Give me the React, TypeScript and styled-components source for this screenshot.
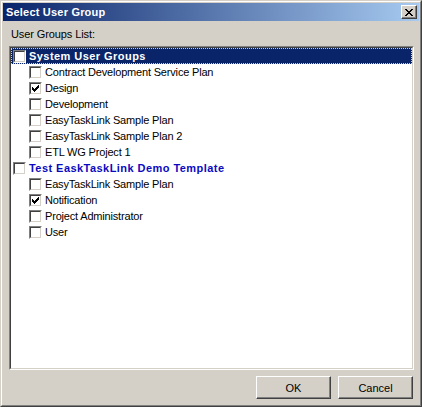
import React from "react";
import styled, { createGlobalStyle, css } from "styled-components";

const Global = createGlobalStyle`
  html, body { margin: 0; padding: 0; background: #d4d0c8; }
  * { box-sizing: border-box; }
`;

const Window = styled.div`
  width: 422px;
  height: 407px;
  background: #d4d0c8;
  border: 1px solid;
  border-color: #d4d0c8 #404040 #404040 #d4d0c8;
  font-family: "Liberation Sans", Arial, sans-serif;
  font-size: 11px;
  color: #000;
  display: flex;
`;

const Inner = styled.div`
  flex: 1;
  border: 1px solid;
  border-color: #ffffff #808080 #808080 #ffffff;
  padding: 1px;
  display: flex;
  flex-direction: column;
`;

const TitleBar = styled.div`
  height: 18px;
  background: linear-gradient(to right, #0a246a, #a6caf0);
  display: flex;
  align-items: center;
  justify-content: space-between;
  padding: 0 2px 0 3px;
`;

const TitleText = styled.span`
  color: #fff;
  font-weight: bold;
  font-size: 11px;
  letter-spacing: 0.2px;
`;

const CloseButton = styled.div`
  width: 16px;
  height: 14px;
  background: #d4d0c8;
  border: 1px solid;
  border-color: #ffffff #404040 #404040 #ffffff;
  box-shadow: inset -1px -1px 0 #808080;
  display: flex;
  align-items: center;
  justify-content: center;
`;

const Body = styled.div`
  flex: 1;
  display: flex;
  flex-direction: column;
  padding: 6px 5px 5px 6px;
`;

const Label = styled.div`
  line-height: 14px;
  height: 14px;
  margin-bottom: 5px;
  padding-left: 2px;
  letter-spacing: -0.1px;
`;

const ListBox = styled.div`
  flex: 1;
  background: #fff;
  border: 1px solid;
  border-color: #808080 #ffffff #ffffff #808080;
  display: flex;
`;

const ListInner = styled.div`
  flex: 1;
  border: 1px solid;
  border-color: #404040 #d4d0c8 #d4d0c8 #404040;
  display: flex;
  flex-direction: column;
`;

const Row = styled.div<{ $child?: boolean; $selected?: boolean }>`
  height: 16px;
  display: flex;
  align-items: center;
  gap: 3px;
  padding-left: ${(p) => (p.$child ? 18 : 2)}px;
  ${(p) =>
    p.$selected &&
    css`
      background: #0a246a;
      outline: 1px dotted #d0d0d0;
      outline-offset: -1px;
    `}
`;

const RowText = styled.span<{ $group?: boolean; $selected?: boolean }>`
  font-weight: ${(p) => (p.$group ? "bold" : "normal")};
  color: ${(p) => (p.$selected ? "#ffffff" : p.$group ? "#0a0ac0" : "#000")};
  white-space: nowrap;
  line-height: 16px;
  letter-spacing: ${(p) => (p.$group ? "0.45px" : "-0.18px")};
`;

const Box = styled.span`
  width: 13px;
  height: 13px;
  flex: none;
  background: #fff;
  border: 1px solid;
  border-color: #808080 #ffffff #ffffff #808080;
  display: flex;
`;

const BoxInner = styled.span`
  flex: 1;
  border: 1px solid;
  border-color: #404040 #d4d0c8 #d4d0c8 #404040;
  display: flex;
  align-items: center;
  justify-content: center;
`;

const Footer = styled.div`
  display: flex;
  justify-content: flex-end;
  gap: 7px;
  margin-top: 6px;
  padding-right: 1px;
`;

const Button = styled.button`
  width: 75px;
  height: 23px;
  background: #d4d0c8;
  font-family: "Liberation Sans", Arial, sans-serif;
  font-size: 11px;
  color: #000;
  border: 1px solid;
  border-color: #ffffff #404040 #404040 #ffffff;
  box-shadow: inset -1px -1px 0 #808080;
  padding: 0;
`;

const Check = () => (
  <svg width="7" height="7" viewBox="0 0 7 7" shapeRendering="crispEdges">
    <path d="M0 2h1v3h-1zM1 3h1v3h-1zM2 4h1v3h-1zM3 3h1v3h-1zM4 2h1v3h-1zM5 1h1v3h-1zM6 0h1v3h-1z" fill="#000" />
  </svg>
);

const CheckBox = ({ checked }: { checked?: boolean }) => (
  <Box>
    <BoxInner>{checked && <Check />}</BoxInner>
  </Box>
);

type Item = { label: string; group?: boolean; checked?: boolean; selected?: boolean };

const items: Item[] = [
  { label: "System User Groups", group: true, selected: true },
  { label: "Contract Development Service Plan" },
  { label: "Design", checked: true },
  { label: "Development" },
  { label: "EasyTaskLink Sample Plan" },
  { label: "EasyTaskLink Sample Plan 2" },
  { label: "ETL WG Project 1" },
  { label: "Test EaskTaskLink Demo Template", group: true },
  { label: "EasyTaskLink Sample Plan" },
  { label: "Notification", checked: true },
  { label: "Project Administrator" },
  { label: "User" },
];

export default function App() {
  return (
    <>
      <Global />
      <Window>
        <Inner>
          <TitleBar>
            <TitleText>Select User Group</TitleText>
            <CloseButton>
              <svg width="8" height="7" viewBox="0 0 8 7" shapeRendering="crispEdges">
                <path
                  d="M0 0h2v1h-2zM6 0h2v1h-2zM1 1h2v1h-2zM5 1h2v1h-2zM2 2h4v1h-4zM3 3h2v1h-2zM2 4h4v1h-4zM1 5h2v1h-2zM5 5h2v1h-2zM0 6h2v1h-2zM6 6h2v1h-2z"
                  fill="#000"
                />
              </svg>
            </CloseButton>
          </TitleBar>
          <Body>
            <Label>User Groups List:</Label>
            <ListBox>
              <ListInner>
                {items.map((it, i) => (
                  <Row key={i} $child={!it.group} $selected={it.selected}>
                    <CheckBox checked={it.checked} />
                    <RowText $group={it.group} $selected={it.selected}>
                      {it.label}
                    </RowText>
                  </Row>
                ))}
              </ListInner>
            </ListBox>
            <Footer>
              <Button>OK</Button>
              <Button>Cancel</Button>
            </Footer>
          </Body>
        </Inner>
      </Window>
    </>
  );
}
